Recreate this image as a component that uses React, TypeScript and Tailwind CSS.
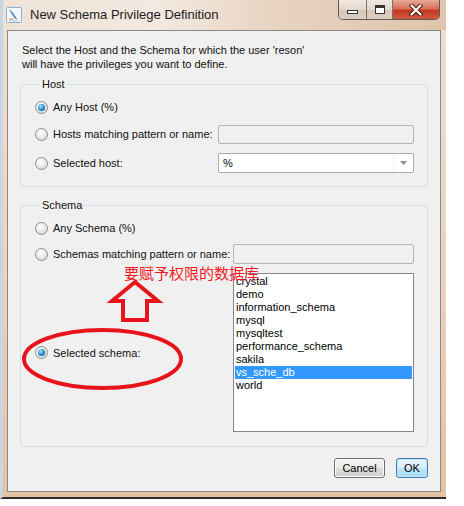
import React from "react";

function Radio({ checked }: { checked?: boolean }) {
  return (
    <span className="flex h-[13px] w-[13px] shrink-0 items-center justify-center rounded-full border border-[#8e8f8f] bg-[radial-gradient(circle_at_40%_35%,#ffffff,#e6e6e6_55%,#c9c9c9)]">
      {checked && (
        <span className="h-[7px] w-[7px] rounded-full bg-[radial-gradient(circle_at_40%_35%,#a8e2ff,#1f86cc_55%,#0b4a80)]" />
      )}
    </span>
  );
}

function RadioLabel({ checked, label }: { checked?: boolean; label: string }) {
  return (
    <div className="flex items-center">
      <Radio checked={checked} />
      <span className="ml-[5px] text-[11px] leading-[14px] text-[#111]">{label}</span>
    </div>
  );
}

function AppIcon() {
  return (
    <svg width="16" height="16" viewBox="0 0 16 16">
      <rect x="0.5" y="0.5" width="15" height="15" rx="1" fill="#f4f8fc" stroke="#8fb0d2" />
      <path d="M3 2.5 C5.5 3.5 8 6 9.5 9.5 L11.5 12.5 L9 11.5 C6.5 8.5 4.5 5.5 3 2.5 Z" fill="#4f7fb6" />
      <path d="M5 4 C7 5.5 8.5 7.5 9.5 9.5" stroke="#cfe0f2" strokeWidth="0.8" fill="none" />
      <path d="M3 12 L7.5 12" stroke="#d89a5a" strokeWidth="1.2" />
      <path d="M3 13.8 L12.5 13.8" stroke="#9ab8d8" strokeWidth="0.8" />
    </svg>
  );
}

function WindowButtons() {
  return (
    <div className="ml-auto mr-[6px] flex h-[20px] w-[102px] overflow-hidden rounded-b-[5px] border border-t-0 border-[#5e5a57]">
      <div className="flex w-[28px] items-center justify-center border-r border-[#7a746f] bg-[linear-gradient(180deg,#f1e9e2_0%,#e3d6ca_50%,#d6c6b8_51%,#dccdc0_100%)]">
        <span className="mt-[5px] h-[4px] w-[11px] border border-[#333] bg-white" />
      </div>
      <div className="flex w-[26px] items-center justify-center border-r border-[#7a746f] bg-[linear-gradient(180deg,#f1e9e2_0%,#e3d6ca_50%,#d6c6b8_51%,#dccdc0_100%)]">
        <span className="h-[9px] w-[10px] border border-[#333] bg-white shadow-[inset_0_2px_0_#333,inset_0_0_0_2px_#fff]" />
      </div>
      <div className="flex flex-1 items-center justify-center bg-[linear-gradient(180deg,#e9a898_0%,#d9705a_45%,#c4381f_55%,#d0583c_100%)]">
        <svg width="14" height="12" viewBox="0 0 14 12">
          <path d="M2.5 1.5 L11.5 10.5 M11.5 1.5 L2.5 10.5" stroke="#4a1e14" strokeWidth="4.2" strokeLinecap="round" />
          <path d="M2.5 1.5 L11.5 10.5 M11.5 1.5 L2.5 10.5" stroke="#ffffff" strokeWidth="2.2" strokeLinecap="round" />
        </svg>
      </div>
    </div>
  );
}

const schemas = [
  "crystal",
  "demo",
  "information_schema",
  "mysql",
  "mysqltest",
  "performance_schema",
  "sakila",
  "vs_sche_db",
  "world",
];

export default function App() {
  return (
    <div className="relative h-[506px] w-[464px] bg-white font-['Liberation_Sans',Arial,sans-serif] text-black">
      <div className="flex h-[499px] w-[446px] flex-col rounded-tr-[6px] border-b-[2px] border-l-[3px] border-b-[#2f2f2f] border-l-[#c9d5e2] bg-[linear-gradient(180deg,#efe0d3_0%,#ead3bf_55%,#e4c2a3_100%)]">
        {/* Title bar */}
        <div className="flex h-[30px] items-start bg-[linear-gradient(90deg,#efe3d8_0%,#f3e9e0_35%,#e8d4c2_60%,#dfc4ab_100%)]">
          <div className="ml-[3px] mt-[7px] flex items-center">
            <AppIcon />
            <span className="ml-[8px] text-[13px] leading-[16px] text-[#1b1b1b]">
              New Schema Privilege Definition
            </span>
          </div>
          <WindowButtons />
        </div>

        {/* Client area */}
        <div className="ml-[4px] flex h-[462px] w-[434px] flex-col border border-[#8a8a8a] bg-[#f0f0f0]">
          <div className="pl-[14px] pt-[12px] text-[11px] leading-[14px] text-[#111]">
            <div>Select the Host and the Schema for which the user 'reson'</div>
            <div>will have the privileges you want to define.</div>
          </div>

          {/* Host group */}
          <fieldset className="mx-[12px] mt-[6px] rounded-[3px] border border-[#d5dfe5] pb-[13px] pl-[14px] pr-[13px]">
            <legend className="ml-[5px] px-[2px] text-[11px] leading-[14px] text-[#111]">Host</legend>
            <div className="mt-[6px] flex h-[20px] items-center">
              <RadioLabel checked label="Any Host (%)" />
            </div>
            <div className="mt-[7px] flex h-[20px] items-center">
              <RadioLabel label="Hosts matching pattern or name:" />
              <div className="ml-auto h-[19px] w-[196px] rounded-[2px] border border-[#b5b5b5] bg-[#f0f0f0]" />
            </div>
            <div className="mt-[9px] flex h-[20px] items-center">
              <RadioLabel label="Selected host:" />
              <div className="ml-auto flex h-[20px] w-[196px] items-center rounded-[2px] border border-[#acacac] bg-white">
                <span className="flex-1 pl-[4px] text-[11px] leading-[14px]">%</span>
                <span className="flex h-full w-[20px] items-center justify-center border-l border-[#f0f0f0]">
                  <svg width="7" height="4" viewBox="0 0 7 4">
                    <path d="M0 0 H7 L3.5 4 Z" fill="#8d8d8d" />
                  </svg>
                </span>
              </div>
            </div>
          </fieldset>

          {/* Schema group */}
          <fieldset className="mx-[12px] mt-[11px] rounded-[3px] border border-[#d5dfe5] pb-[14px] pl-[14px] pr-[13px]">
            <legend className="ml-[5px] px-[2px] text-[11px] leading-[14px] text-[#111]">Schema</legend>
            <div className="mt-[6px] flex h-[20px] items-center">
              <RadioLabel label="Any Schema (%)" />
            </div>
            <div className="mt-[6px] flex h-[20px] items-center">
              <RadioLabel label="Schemas matching pattern or name:" />
              <div className="ml-auto h-[20px] w-[181px] rounded-[2px] border border-[#b5b5b5] bg-[#f0f0f0]" />
            </div>
            <div className="mt-[9px] flex items-center">
              <RadioLabel checked label="Selected schema:" />
              <div className="ml-auto h-[159px] w-[181px] border border-[#828790] bg-white pt-[1px]">
                {schemas.map((s) => (
                  <div
                    key={s}
                    className={
                      s === "vs_sche_db"
                        ? "mx-[1px] h-[13px] bg-[#3399ff] pl-[1px] text-[11px] leading-[13px] text-white"
                        : "mx-[1px] h-[13px] pl-[1px] text-[11px] leading-[13px] text-black"
                    }
                  >
                    {s}
                  </div>
                ))}
              </div>
            </div>
          </fieldset>

          {/* Buttons */}
          <div className="mt-[11px] flex justify-end gap-[11px] pr-[12px]">
            <button className="h-[20px] w-[51px] rounded-[3px] border border-[#707070] bg-[linear-gradient(180deg,#f4f4f4_0%,#ebebeb_50%,#dddddd_51%,#cfcfcf_100%)] text-[11px] leading-[14px] text-black shadow-[inset_0_0_0_1px_#fcfcfc]">
              Cancel
            </button>
            <button className="h-[20px] w-[32px] rounded-[3px] border border-[#3c7fb1] bg-[linear-gradient(180deg,#eaf6fd_0%,#d9f0fc_50%,#bee6fd_51%,#a7d9f5_100%)] text-[11px] leading-[14px] text-black shadow-[inset_0_0_0_1px_#c4e6fa]">
              OK
            </button>
          </div>
        </div>
      </div>

      {/* Annotations */}
      <div className="absolute left-[124px] top-[264px] whitespace-nowrap font-['Noto_Sans_CJK_SC',sans-serif] text-[15px] leading-[18px] text-[#f01a1e]">
        要赋予权限的数据库
      </div>
      <svg className="absolute left-0 top-0" width="464" height="506" viewBox="0 0 464 506" fill="none">
        <polygon
          points="135,282 158,301 147,301 147,320 123,320 123,301 112,301"
          stroke="#e8141b"
          strokeWidth="4"
          strokeLinejoin="miter"
        />
        <ellipse cx="102.5" cy="359" rx="78.5" ry="29" stroke="#e8141b" strokeWidth="4" />
      </svg>
    </div>
  );
}
